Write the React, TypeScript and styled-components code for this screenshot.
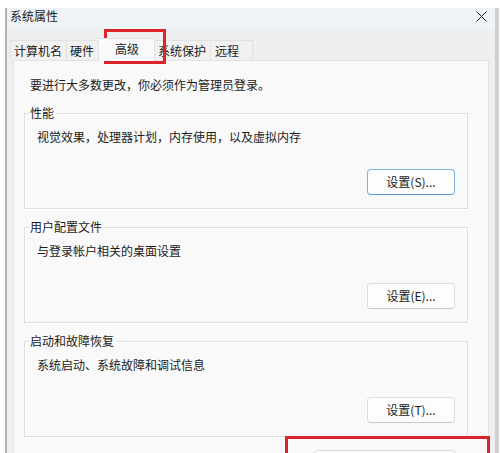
import styled, { createGlobalStyle } from 'styled-components'

const GlobalStyle = createGlobalStyle`
  html, body {
    margin: 0;
    padding: 0;
    background: #ffffff;
    overflow: hidden;
  }
  body {
    font-family: "Noto Sans CJK SC", "Noto Sans", sans-serif;
    font-size: 12px;
    color: #1b1b1b;
  }
`

const Page = styled.div`
  position: relative;
  width: 500px;
  height: 453px;
  padding-top: 8px;
  box-sizing: border-box;
  overflow: hidden;
`

const Window = styled.div`
  margin-left: 5px;
  width: 494px;
  height: 480px;
  box-sizing: border-box;
  border-left: 2px solid #b2b2b2;
  border-right: 4px solid #cfcfcf;
  background: #efefef;
  display: flex;
  flex-direction: column;
`

const TitleBar = styled.div`
  flex-shrink: 0;
  height: 22px;
  background: #eef3f6;
  display: flex;
  justify-content: space-between;
  align-items: flex-start;
  padding: 0 8px 0 3px;
`

const Title = styled.div`
  line-height: 16px;
  font-size: 12px;
  color: #222;
`

const CloseButton = styled.div`
  width: 12px;
  height: 16px;
  display: flex;
  align-items: center;
  justify-content: center;
`

const TabRow = styled.div`
  flex-shrink: 0;
  height: 30px;
  display: flex;
  align-items: flex-end;
  padding-left: 4px;
`

const Tab = styled.div<{ $active?: boolean; $pl: number; $pr: number }>`
  height: ${p => (p.$active ? 23 : 20)}px;
  line-height: ${p => (p.$active ? 19 : 20)}px;
  box-sizing: border-box;
  padding: 0 ${p => p.$pr}px 0 ${p => p.$pl}px;
  border: 1px solid #e2e2e2;
  border-bottom: none;
  margin-left: -1px;
  background: ${p => (p.$active ? '#f9f9f9' : '#f1f1f1')};
  position: relative;
  z-index: ${p => (p.$active ? 1 : 0)};
  margin-bottom: ${p => (p.$active ? -1 : 0)}px;
  color: #1b1b1b;
`

const Panel = styled.div`
  flex: 1;
  min-height: 0;
  margin: 0 6px 0 6px;
  background: #f9f9f9;
  border: 1px solid #e3e3e3;
  padding: 0 20px 0 10px;
  display: flex;
  flex-direction: column;
`

const Intro = styled.div`
  flex-shrink: 0;
  margin: 16px 0 12px 6px;
  line-height: 16px;
`

const Group = styled.fieldset`
  flex-shrink: 0;
  margin: 0 0 10px 0;
  padding: 0;
  height: 104px;
  box-sizing: border-box;
  border: 1px solid #dedede;
  box-shadow: inset 1px 1px 0 #ffffff, 1px 1px 0 #ffffff;
  display: flex;
  flex-direction: column;
  min-width: 0;
`

const Legend = styled.legend`
  margin-left: 4px;
  padding: 0 2px 0 1px;
  line-height: 16px;
  color: #1b1b1b;
`

const Description = styled.div`
  margin: 8px 0 0 12px;
  line-height: 16px;
`

const SettingsButton = styled.button<{ $default?: boolean }>`
  margin: 24px 12px 0 auto;
  width: 88px;
  height: 26px;
  border-radius: 4px;
  border: 1px solid ${p => (p.$default ? '#7fb1e3' : '#dcdcdc')};
  border-bottom-color: ${p => (p.$default ? '#5c98d6' : '#c8c8c8')};
  background: #fdfdfd;
  font-family: inherit;
  font-size: 12px;
  color: #1b1b1b;
  padding: 0;
  line-height: 24px;
`

const EnvButton = styled.button`
  flex-shrink: 0;
  margin: 3px 12px 0 auto;
  width: 142px;
  height: 26px;
  border-radius: 4px;
  border: 1px solid #dcdcdc;
  background: #fdfdfd;
  font-family: inherit;
  font-size: 12px;
  color: #1b1b1b;
`

const Highlight = styled.div`
  position: absolute;
  box-sizing: border-box;
  border: 3px solid #dc2329;
  pointer-events: none;
`

const tabs = [
  { label: '计算机名', pl: 3, pr: 4 },
  { label: '硬件', pl: 3, pr: 4 },
  { label: '高级', pl: 16, pr: 15, active: true },
  { label: '系统保护', pl: 3, pr: 4 },
  { label: '远程', pl: 4, pr: 13 },
]

const groups = [
  { title: '性能', text: '视觉效果，处理器计划，内存使用，以及虚拟内存', button: '设置(S)...', isDefault: true },
  { title: '用户配置文件', text: '与登录帐户相关的桌面设置', button: '设置(E)...' },
  { title: '启动和故障恢复', text: '系统启动、系统故障和调试信息', button: '设置(T)...' },
]

export default function App() {
  return (
    <Page>
      <GlobalStyle />
      <Window>
        <TitleBar>
          <Title>系统属性</Title>
          <CloseButton>
            <svg width="11" height="11" viewBox="0 0 11 11">
              <path d="M0.5 0.5 L10.5 10.5 M10.5 0.5 L0.5 10.5" stroke="#1f1f1f" strokeWidth="1" fill="none" />
            </svg>
          </CloseButton>
        </TitleBar>
        <TabRow>
          {tabs.map(t => (
            <Tab key={t.label} $active={t.active} $pl={t.pl} $pr={t.pr}>
              {t.label}
            </Tab>
          ))}
        </TabRow>
        <Panel>
          <Intro>要进行大多数更改，你必须作为管理员登录。</Intro>
          {groups.map(g => (
            <Group key={g.title}>
              <Legend>{g.title}</Legend>
              <Description>{g.text}</Description>
              <SettingsButton $default={g.isDefault}>{g.button}</SettingsButton>
            </Group>
          ))}
          <EnvButton>环境变量(N)...</EnvButton>
        </Panel>
      </Window>
      <Highlight style={{ left: 104, top: 29, width: 62, height: 35 }} />
      <Highlight style={{ left: 285, top: 436, width: 205, height: 40 }} />
    </Page>
  )
}
